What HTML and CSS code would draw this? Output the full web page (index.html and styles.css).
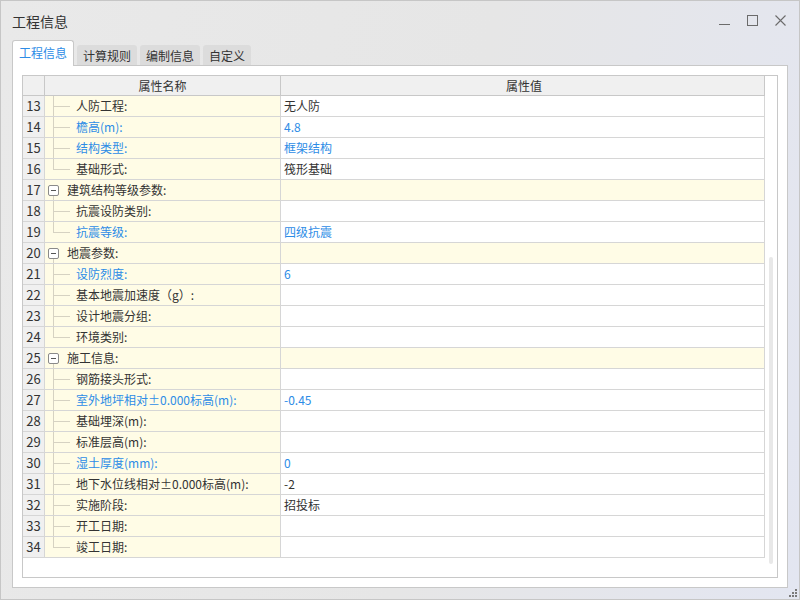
FILE: index.html
```html
<!DOCTYPE html>
<html lang="zh-CN">
<head>
<meta charset="utf-8">
<title>工程信息</title>
<link rel="stylesheet" href="styles.css">
</head>
<body>
<div class="window">
  <div class="titlebar">
    <span class="title">工程信息</span>
    <div class="controls">
      <svg viewBox="0 0 11 11"><path d="M0 9.5H11" stroke="#6b6b6b" stroke-width="1" fill="none"/></svg>
      <svg viewBox="0 0 11 11"><rect x="0.5" y="0.5" width="10" height="10" stroke="#6b6b6b" stroke-width="1" fill="none"/></svg>
      <svg viewBox="0 0 11 11"><path d="M0.5 0.5L10.5 10.5M10.5 0.5L0.5 10.5" stroke="#6b6b6b" stroke-width="1.1" fill="none"/></svg>
    </div>
  </div>
  <div class="tabs">
    <div class="tab active">工程信息</div>
    <div class="tab">计算规则</div>
    <div class="tab">编制信息</div>
    <div class="tab">自定义</div>
  </div>
  <div class="panel">
    <div class="grid">
      <div class="table">
        <div class="hdr">
          <div class="c num"></div>
          <div class="c name">属性名称</div>
          <div class="c val">属性值</div>
        </div>
        <div class="row"><div class="c num">13</div><div class="c name child">人防工程:</div><div class="c val">无人防</div></div>
        <div class="row"><div class="c num">14</div><div class="c name child blue">檐高(m):</div><div class="c val blue">4.8</div></div>
        <div class="row"><div class="c num">15</div><div class="c name child blue">结构类型:</div><div class="c val blue">框架结构</div></div>
        <div class="row"><div class="c num">16</div><div class="c name child last">基础形式:</div><div class="c val">筏形基础</div></div>
        <div class="row group"><div class="c num">17</div><div class="c name grp"><span class="box"></span>建筑结构等级参数:</div><div class="c val"></div></div>
        <div class="row"><div class="c num">18</div><div class="c name child">抗震设防类别:</div><div class="c val"></div></div>
        <div class="row"><div class="c num">19</div><div class="c name child last blue">抗震等级:</div><div class="c val blue">四级抗震</div></div>
        <div class="row group"><div class="c num">20</div><div class="c name grp"><span class="box"></span>地震参数:</div><div class="c val"></div></div>
        <div class="row"><div class="c num">21</div><div class="c name child blue">设防烈度:</div><div class="c val blue">6</div></div>
        <div class="row"><div class="c num">22</div><div class="c name child">基本地震加速度（g）:</div><div class="c val"></div></div>
        <div class="row"><div class="c num">23</div><div class="c name child">设计地震分组:</div><div class="c val"></div></div>
        <div class="row"><div class="c num">24</div><div class="c name child last">环境类别:</div><div class="c val"></div></div>
        <div class="row group"><div class="c num">25</div><div class="c name grp"><span class="box"></span>施工信息:</div><div class="c val"></div></div>
        <div class="row"><div class="c num">26</div><div class="c name child">钢筋接头形式:</div><div class="c val"></div></div>
        <div class="row"><div class="c num">27</div><div class="c name child blue">室外地坪相对±0.000标高(m):</div><div class="c val blue">-0.45</div></div>
        <div class="row"><div class="c num">28</div><div class="c name child">基础埋深(m):</div><div class="c val"></div></div>
        <div class="row"><div class="c num">29</div><div class="c name child">标准层高(m):</div><div class="c val"></div></div>
        <div class="row"><div class="c num">30</div><div class="c name child blue">湿土厚度(mm):</div><div class="c val blue">0</div></div>
        <div class="row"><div class="c num">31</div><div class="c name child">地下水位线相对±0.000标高(m):</div><div class="c val">-2</div></div>
        <div class="row"><div class="c num">32</div><div class="c name child">实施阶段:</div><div class="c val">招投标</div></div>
        <div class="row"><div class="c num">33</div><div class="c name child">开工日期:</div><div class="c val"></div></div>
        <div class="row"><div class="c num">34</div><div class="c name child last">竣工日期:</div><div class="c val"></div></div>
      </div>
      <div class="scroll"><div class="thumb"></div></div>
    </div>
  </div>
  <svg class="grip" viewBox="0 0 10 10"><g fill="#7a7a7a"><rect x="7" y="1" width="2" height="2"/><rect x="4" y="4" width="2" height="2"/><rect x="7" y="4" width="2" height="2"/><rect x="1" y="7" width="2" height="2"/><rect x="4" y="7" width="2" height="2"/><rect x="7" y="7" width="2" height="2"/></g></svg>
</div>
</body>
</html>
```

FILE: styles.css
```css
* { box-sizing: border-box; }
html, body { margin: 0; padding: 0; }
body {
  width: 800px;
  height: 600px;
  overflow: hidden;
  font-family: "Noto Sans CJK SC", "Noto Sans", sans-serif;
  color: #333;
}
.window {
  position: relative;
  width: 800px;
  height: 600px;
  border: 1px solid #c6c6c6;
  background: linear-gradient(100deg, #e9e9e9 0%, #e6e6e6 55%, #e3e6f1 100%);
  display: flex;
  flex-direction: column;
}
.titlebar {
  height: 39px;
  flex: none;
  display: flex;
  align-items: center;
  justify-content: space-between;
  padding: 0 13px 0 11px;
}
.title { font-size: 14px; color: #333; }
.controls { display: flex; align-items: center; gap: 17px; margin-top: -1px; }
.controls svg { display: block; width: 11px; height: 11px; }
.tabs {
  flex: none;
  height: 26px;
  margin: 0 11px -1px;
  display: flex;
  align-items: flex-end;
  gap: 3px;
}
.tab {
  height: 21px;
  padding: 0 6px;
  background: #dcdcdc;
  border-radius: 3px 3px 0 0;
  font-size: 12px;
  line-height: 21px;
  color: #333;
}
.tab.active {
  position: relative;
  z-index: 1;
  height: 26px;
  background: #fff;
  border: 1px solid #c8c8c8;
  border-bottom: none;
  padding: 0 6px;
  color: #2d8ce6;
  line-height: 24px;
}
.panel {
  flex: none;
  height: 523px;
  margin: 0 11px;
  background: #fff;
  border: 1px solid #c8c8c8;
  padding: 9px;
}
.grid {
  height: 503px;
  border: 1px solid #c8c8c8;
  display: flex;
}
.table { width: 742px; flex: none; }
.scroll { flex: 1; padding: 181px 0 0 4px; }
.thumb { width: 4px; height: 307px; background: #e8e8e8; border-radius: 2px; }
.hdr, .row {
  display: flex;
  border-bottom: 1px solid #d6d6d6;
}
.hdr { height: 20px; background: #f0f0f0; border-bottom-color: #c8c8c8; }
.row { height: 21px; }
.c { border-right: 1px solid #d6d6d6; font-size: 12px; line-height: 20px; white-space: nowrap; overflow: hidden; }
.hdr .c { border-right-color: #c8c8c8; line-height: 19px; text-align: center; }
.num { width: 22px; flex: none; background: #f0f0f0; font-size: 13px; text-align: center; }
.name { width: 236px; flex: none; background: #fffce6; }
.hdr .name { background: #f0f0f0; }
.val { width: 484px; flex: none; padding-left: 3px; }
.group .val { background: #fffce6; }
.blue { color: #2d8ce6; }
.child {
  padding-left: 31px;
  background:
    linear-gradient(#d6d2c2, #d6d2c2) 8px 0 / 1px 100% no-repeat,
    linear-gradient(#d6d2c2, #d6d2c2) 8px 10px / 17px 1px no-repeat,
    #fffce6;
}
.child.last {
  background:
    linear-gradient(#d6d2c2, #d6d2c2) 8px 0 / 1px 10px no-repeat,
    linear-gradient(#d6d2c2, #d6d2c2) 8px 10px / 17px 1px no-repeat,
    #fffce6;
}
.grp {
  display: flex;
  align-items: center;
  background:
    linear-gradient(#d6d2c2, #d6d2c2) 8px 16px / 1px 4px no-repeat,
    #fffce6;
}
.box {
  flex: none;
  width: 11px;
  height: 11px;
  margin: 0 8px 0 3px;
  border: 1px solid #8a8a8a;
  border-radius: 2px;
  background: linear-gradient(#555, #555) center / 5px 1px no-repeat, #fff;
}
.grip {
  position: absolute;
  right: 1px;
  bottom: 1px;
  width: 10px;
  height: 10px;
}
```
